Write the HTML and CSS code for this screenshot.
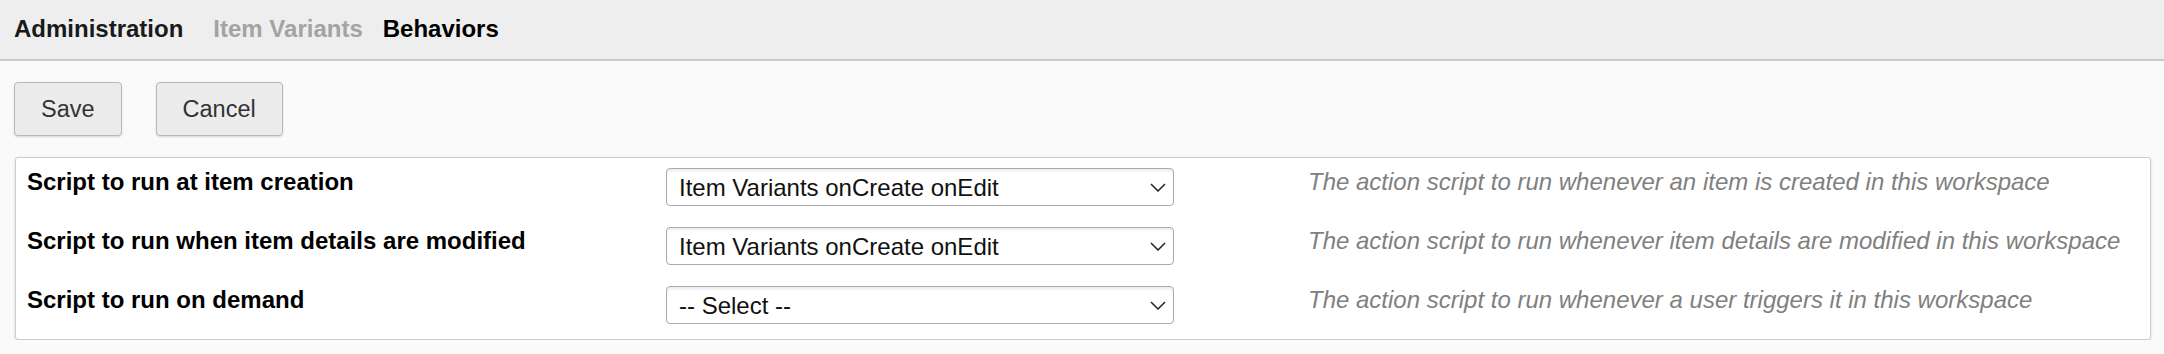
FILE: index.html
```html
<!DOCTYPE html>
<html lang="en">
<head>
    <meta charset="UTF-8">
    <meta name="viewport" content="width=device-width, initial-scale=1.0">
    <title>Behaviors - Administration</title>
    <link rel="stylesheet" href="styles.css">
</head>
<body>
    <div class="page-header">
        <span class="crumb crumb-root">Administration</span>
        <span class="crumb crumb-muted">Item Variants</span>
        <span class="crumb crumb-current">Behaviors</span>
    </div>

    <div class="toolbar">
        <button type="button" class="btn">Save</button>
        <button type="button" class="btn">Cancel</button>
    </div>

    <div class="behaviors-panel">
        <label class="behavior-label" for="onCreate">Script to run at item creation</label>
        <div class="select-wrap">
            <select id="onCreate" class="form-select">
                <option>-- Select --</option>
                <option selected>Item Variants onCreate onEdit</option>
            </select>
            <svg class="select-arrow" width="16" height="9" viewBox="0 0 16 9"><path d="M1 1 L8 8 L15 1" fill="none" stroke="#222" stroke-width="1.5"/></svg>
        </div>
        <div class="behavior-help">The action script to run whenever an item is created in this workspace</div>

        <label class="behavior-label" for="onEdit">Script to run when item details are modified</label>
        <div class="select-wrap">
            <select id="onEdit" class="form-select">
                <option>-- Select --</option>
                <option selected>Item Variants onCreate onEdit</option>
            </select>
            <svg class="select-arrow" width="16" height="9" viewBox="0 0 16 9"><path d="M1 1 L8 8 L15 1" fill="none" stroke="#222" stroke-width="1.5"/></svg>
        </div>
        <div class="behavior-help">The action script to run whenever item details are modified in this workspace</div>

        <label class="behavior-label" for="onDemand">Script to run on demand</label>
        <div class="select-wrap">
            <select id="onDemand" class="form-select">
                <option selected>-- Select --</option>
                <option>Item Variants onCreate onEdit</option>
            </select>
            <svg class="select-arrow" width="16" height="9" viewBox="0 0 16 9"><path d="M1 1 L8 8 L15 1" fill="none" stroke="#222" stroke-width="1.5"/></svg>
        </div>
        <div class="behavior-help">The action script to run whenever a user triggers it in this workspace</div>
    </div>
</body>
</html>
```

FILE: styles.css
```css
* {
    margin: 0;
    padding: 0;
    box-sizing: border-box;
    font-family: 'Liberation Sans', Arial, Helvetica, sans-serif;
}

body {
    background-color: #fafafa;
    font-size: 24px;
    color: #111;
}

.page-header {
    display: flex;
    height: 61px;
    padding: 15px 14px 0;
    background-color: #eeeeee;
    border-bottom: 2px solid #c8c8c8;
    line-height: 28px;
    font-weight: bold;
}

.crumb-root {
    color: #1a1a1a;
    margin-right: 30px;
}

.crumb-muted {
    color: #a3a3a3;
    margin-right: 20px;
}

.crumb-current {
    color: #000;
}

.toolbar {
    display: flex;
    gap: 34px;
    padding: 21px 14px;
}

.btn {
    height: 54px;
    padding: 0 26px;
    font-size: 23.5px;
    color: #333;
    background-color: #ececec;
    border: 1px solid #b8b8b8;
    border-radius: 4px;
    box-shadow: 0 1px 2px rgba(0, 0, 0, 0.15);
    cursor: pointer;
}

.behaviors-panel {
    display: grid;
    grid-template-columns: 639px 642px 1fr;
    row-gap: 21px;
    align-items: start;
    margin: 0 13px 0 15px;
    padding: 10px 11px 15px;
    background-color: #fff;
    border: 1px solid #cdcdcd;
    border-radius: 3px;
    box-shadow: 0 1px 3px rgba(0, 0, 0, 0.15);
}

.behavior-label {
    font-weight: bold;
    line-height: 28px;
    color: #000;
}

.select-wrap {
    position: relative;
    width: 508px;
}

.form-select {
    display: block;
    width: 100%;
    height: 38px;
    padding: 0 40px 0 12px;
    font-size: 24px;
    color: #111;
    background-color: #fff;
    border: 1px solid #ababab;
    border-radius: 4px;
    box-shadow: inset 0 3px 4px -2px rgba(0, 0, 0, 0.12);
    appearance: none;
    -webkit-appearance: none;
}

.select-arrow {
    position: absolute;
    right: 8px;
    top: 15px;
    pointer-events: none;
}

.behavior-help {
    font-style: italic;
    line-height: 28px;
    color: #808080;
}
```
